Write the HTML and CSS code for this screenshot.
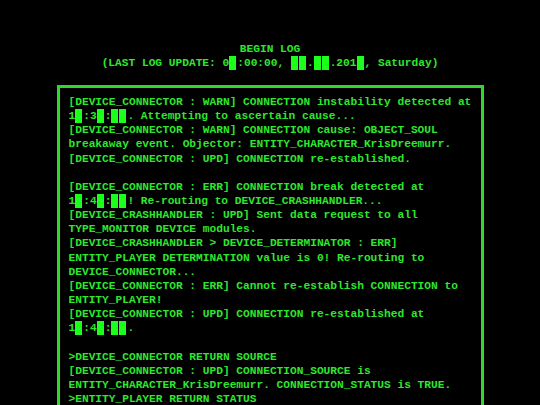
FILE: index.html
```html
<!DOCTYPE html>
<html lang="en">
<head>
    <meta charset="UTF-8">
    <meta name="viewport" content="width=device-width, initial-scale=1.0">
    <title>Log</title>
    <link rel="stylesheet" href="styles.css">
</head>
<body>

<div class="terminal">
    <!-- Header -->
    <div class="log-header">
        <div class="line">BEGIN LOG</div>
        <div class="line">(LAST LOG UPDATE: 0<span class="blk"></span>:00:00, <span class="blk"></span><span class="blk"></span>.<span class="blk"></span><span class="blk"></span>.201<span class="blk"></span>, Saturday)</div>
    </div>

    <!-- Log box -->
    <div class="log-box">
        <div class="line">[DEVICE_CONNECTOR : WARN] CONNECTION instability detected at</div>
        <div class="line">1<span class="blk"></span>:3<span class="blk"></span>:<span class="blk"></span><span class="blk"></span>. Attempting to ascertain cause...</div>
        <div class="line">[DEVICE_CONNECTOR : WARN] CONNECTION cause: OBJECT_SOUL</div>
        <div class="line">breakaway event. Objector: ENTITY_CHARACTER_KrisDreemurr.</div>
        <div class="line">[DEVICE_CONNECTOR : UPD] CONNECTION re-established.</div>
        <div class="line"> </div>
        <div class="line">[DEVICE_CONNECTOR : ERR] CONNECTION break detected at</div>
        <div class="line">1<span class="blk"></span>:4<span class="blk"></span>:<span class="blk"></span><span class="blk"></span>! Re-routing to DEVICE_CRASHHANDLER...</div>
        <div class="line">[DEVICE_CRASHHANDLER : UPD] Sent data request to all</div>
        <div class="line">TYPE_MONITOR DEVICE modules.</div>
        <div class="line">[DEVICE_CRASHHANDLER &gt; DEVICE_DETERMINATOR : ERR]</div>
        <div class="line">ENTITY_PLAYER DETERMINATION value is 0! Re-routing to</div>
        <div class="line">DEVICE_CONNECTOR...</div>
        <div class="line">[DEVICE_CONNECTOR : ERR] Cannot re-establish CONNECTION to</div>
        <div class="line">ENTITY_PLAYER!</div>
        <div class="line">[DEVICE_CONNECTOR : UPD] CONNECTION re-established at</div>
        <div class="line">1<span class="blk"></span>:4<span class="blk"></span>:<span class="blk"></span><span class="blk"></span>.</div>
        <div class="line"> </div>
        <div class="line">&gt;DEVICE_CONNECTOR RETURN SOURCE</div>
        <div class="line">[DEVICE_CONNECTOR : UPD] CONNECTION_SOURCE is</div>
        <div class="line">ENTITY_CHARACTER_KrisDreemurr. CONNECTION_STATUS is TRUE.</div>
        <div class="line">&gt;ENTITY_PLAYER RETURN STATUS</div>
    </div>
</div>

</body>
</html>
```

FILE: styles.css
```css
body {
    margin: 0px;
    background-color: #000;
    color: #2fe62f;
    font-family: "Liberation Mono", "DejaVu Sans Mono", monospace;
    font-weight: bold;
    font-size: 11.2px;
    overflow: hidden;
}
.terminal {
    display: flex;
    flex-direction: column;
    align-items: center;
    padding-top: 42px;
}
.log-header {
    text-align: center;
    margin-bottom: 15px;
}
.log-header .line {
    line-height: 14px;
    height: 14px;
}
.log-box {
    width: 404px;
    border: 3px solid #2ed82e;
    padding: 7px 8px 20px 9px;
}
.line {
    white-space: pre;
    line-height: 14.15px;
    height: 14.15px;
}
/* redacted digit blocks */
.blk {
    display: inline-block;
    width: 7px;
    height: 14px;
    margin-right: 1px;
    vertical-align: top;
    background-color: #1cff1c;
}
```
